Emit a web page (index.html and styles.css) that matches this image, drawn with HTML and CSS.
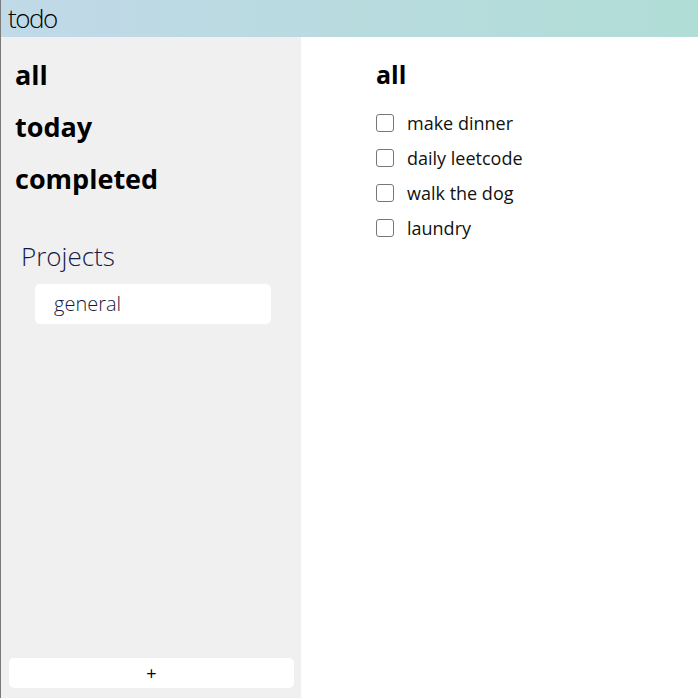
FILE: index.html
```html
<!DOCTYPE html>
<html>
<head>
<meta charset="utf-8">
<link rel="stylesheet" href="styles.css">
</head>
<body>
<div class="app">
  <header class="header">todo</header>
  <div class="body">
    <aside class="sidebar">
      <nav class="filters">
        <div class="filter">all</div>
        <div class="filter">today</div>
        <div class="filter">completed</div>
      </nav>
      <div class="projects">
        <div class="projects-title">Projects</div>
        <div class="project">general</div>
      </div>
      <div class="spacer"></div>
      <button class="add">+</button>
    </aside>
    <main class="main">
      <h1 class="main-title">all</h1>
      <ul class="tasks">
        <li class="task"><span class="box"></span><span>make dinner</span></li>
        <li class="task"><span class="box"></span><span>daily leetcode</span></li>
        <li class="task"><span class="box"></span><span>walk the dog</span></li>
        <li class="task"><span class="box"></span><span>laundry</span></li>
      </ul>
    </main>
  </div>
</div>
</body>
</html>
```

FILE: styles.css
```css
html, body {
  margin: 0;
  padding: 0;
  height: 100%;
}
body {
  font-family: "Open Sans", "Noto Sans", sans-serif;
  color: #000;
}
.app {
  height: 100%;
  display: flex;
  flex-direction: column;
  border-left: 1px solid #7a7a7a;
  box-sizing: border-box;
}
.header {
  height: 37px;
  background: linear-gradient(90deg, #c1d9e8, #b0ddd6);
  font-size: 26px;
  font-weight: 300;
  letter-spacing: -1.5px;
  line-height: 37px;
  padding-left: 7px;
  flex: none;
}
.body {
  flex: 1;
  display: flex;
  min-height: 0;
}
.sidebar {
  width: 300px;
  background: #f0f0f0;
  display: flex;
  flex-direction: column;
  padding: 20px 6px 10px 8px;
  box-sizing: border-box;
}
.filters {
  display: flex;
  flex-direction: column;
  gap: 16px;
  padding-left: 6px;
}
.filter {
  font-size: 27px;
  font-weight: 700;
  line-height: 36px;
}
.projects {
  margin-top: 41px;
  padding-left: 12px;
}
.projects-title {
  font-size: 26px;
  font-weight: 300;
  color: #141a4a;
  line-height: 36px;
}
.project {
  margin-top: 10px;
  margin-left: 14px;
  width: 236px;
  height: 40px;
  box-sizing: border-box;
  background: #fff;
  border-radius: 5px;
  padding-left: 19px;
  font-size: 20px;
  font-weight: 300;
  line-height: 40px;
  color: #1a1a3a;
}
.spacer { flex: 1; }
.add {
  height: 30px;
  width: 285px;
  margin-left: 0;
  background: #fff;
  border: none;
  border-radius: 5px;
  font-family: "Open Sans", sans-serif;
  font-size: 18px;
  line-height: 30px;
  padding: 0;
  color: #000;
}
.main {
  flex: 1;
  background: #fff;
  padding: 17px 0 0 75px;
}
.main-title {
  margin: 0;
  font-size: 25px;
  font-weight: 700;
  line-height: 40px;
}
.tasks {
  list-style: none;
  margin: 11px 0 0 0;
  padding: 0;
}
.task {
  display: flex;
  align-items: center;
  height: 35px;
  font-size: 18px;
  color: #111;
}
.box {
  width: 18px;
  height: 18px;
  box-sizing: border-box;
  border: 1px solid #767676;
  border-radius: 3px;
  margin-right: 13px;
  background: #fff;
}
```
